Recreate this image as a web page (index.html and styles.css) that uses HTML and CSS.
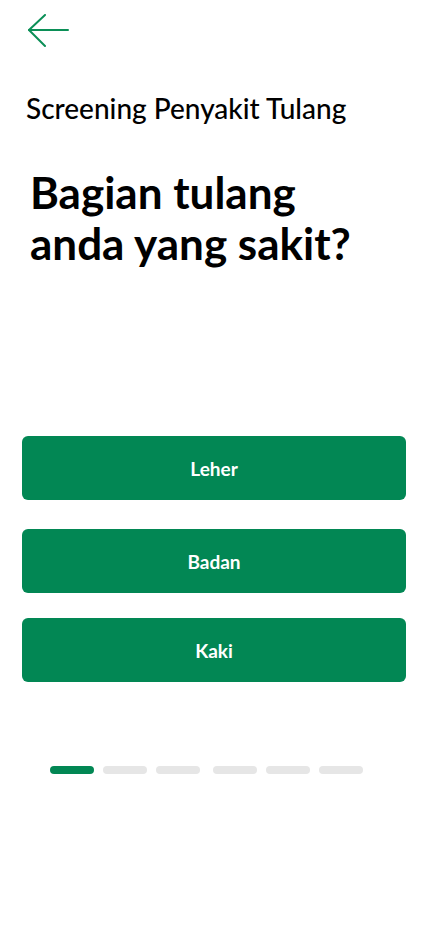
FILE: index.html
```html
<!DOCTYPE html>
<html lang="id">
<head>
<meta charset="utf-8">
<meta name="viewport" content="width=device-width, initial-scale=1">
<title>Screening Penyakit Tulang</title>
<link rel="stylesheet" href="styles.css">
</head>
<body>
<main class="screen">
  <header class="topbar">
    <button class="back" aria-label="Kembali">
      <svg width="42" height="34" viewBox="0 0 42 34" fill="none" stroke="#0b8f57" stroke-width="2" stroke-linecap="round" stroke-linejoin="round">
        <path d="M40 16H1"/>
        <path d="M17 1L1 16L17 32"/>
      </svg>
    </button>
  </header>
  <p class="subtitle">Screening Penyakit Tulang</p>
  <h1 class="question">Bagian tulang<br>anda yang sakit?</h1>
  <div class="options">
    <button class="option">Leher</button>
    <button class="option opt-2">Badan</button>
    <button class="option opt-3">Kaki</button>
  </div>
  <div class="progress">
    <span class="seg active"></span>
    <span class="seg"></span>
    <span class="seg"></span>
    <span class="seg wide-gap"></span>
    <span class="seg"></span>
    <span class="seg"></span>
  </div>
</main>
</body>
</html>
```
FILE: styles.css
```css
* { box-sizing: border-box; }
html, body { margin: 0; padding: 0; background: #fff; }
body {
  font-family: Lato, "Open Sans", sans-serif;
  color: #000;
  width: 428px;
  height: 926px;
}
.screen {
  display: flex;
  flex-direction: column;
  padding: 14px 22px 0 22px;
}
.topbar { display: flex; height: 34px; }
.back {
  border: 0;
  background: none;
  padding: 0;
  margin-left: 6px;
  width: 42px;
  height: 34px;
  cursor: pointer;
}
.back svg { display: block; }
.subtitle {
  margin: 44px 0 0 4px;
  font-size: 28px;
  line-height: 32px;
  font-weight: 500;
}
.question {
  margin: 43px 0 0 8px;
  font-size: 44px;
  line-height: 51px;
  font-weight: 700;
}
.options {
  display: flex;
  flex-direction: column;
  margin-top: 167px;
}
.option {
  height: 64px;
  border: 0;
  border-radius: 6px;
  background: #028754;
  color: #fff;
  font-family: inherit;
  font-size: 19px;
  font-weight: 700;
  cursor: pointer;
}
.opt-2 { margin-top: 29px; }
.opt-3 { margin-top: 25px; }
.progress {
  display: flex;
  gap: 9px;
  margin: 84px 0 0 28px;
}
.seg {
  width: 44px;
  height: 8px;
  border-radius: 4px;
  background: #e6e6e6;
}
.seg.active { background: #028754; }
.seg.wide-gap { margin-left: 4px; }
```
